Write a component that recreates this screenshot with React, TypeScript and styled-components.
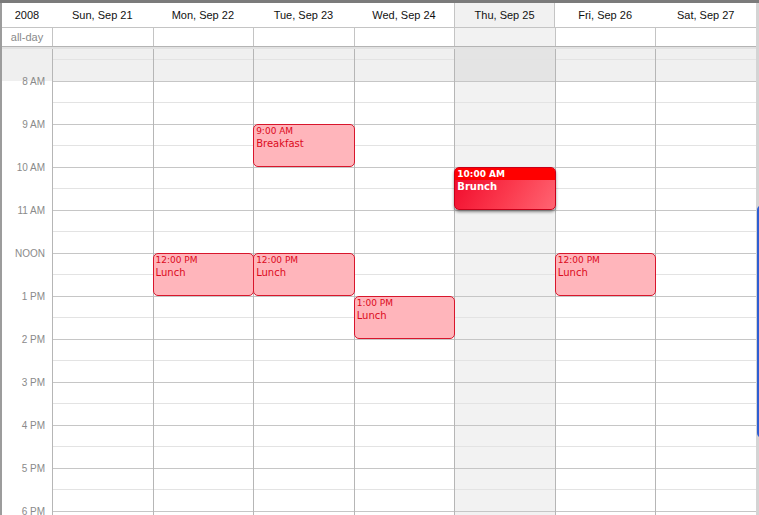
import React from 'react';
import styled, { createGlobalStyle, css } from 'styled-components';

const GlobalStyle = createGlobalStyle`
  html, body { margin: 0; padding: 0; background: #fff; }
  body { font-family: "Liberation Sans", Arial, sans-serif; overflow: hidden; }
`;

const COLS = '50px repeat(7, 1fr)';
const HOUR = 43;
const EARLY = 32;

const Window = styled.div`
  width: 759px;
  height: 515px;
  overflow: hidden;
  display: flex;
  flex-direction: column;
  background: #fff;
`;

const TopBar = styled.div`
  flex: none;
  height: 3px;
  background: #7b7b7b;
`;

const Frame = styled.div`
  flex: 1;
  min-height: 0;
  display: flex;
  border-left: 2px solid #9c9c9c;
`;

const Main = styled.div`
  flex: 1;
  min-width: 0;
  display: flex;
  flex-direction: column;
`;

const ScrollStrip = styled.div`
  flex: none;
  width: 3px;
  position: relative;
  overflow: hidden;
  background: #d4d4d4;
`;

const ScrollThumb = styled.div`
  position: absolute;
  left: 1px;
  top: 202px;
  width: 20px;
  height: 233px;
  box-sizing: border-box;
  border: 2px solid #2e5ed2;
  border-radius: 5px;
`;

const HeaderRow = styled.div`
  flex: none;
  display: grid;
  grid-template-columns: ${COLS};
  height: 24px;
  border-bottom: 1px solid #c4c4c4;
`;

const HeaderCell = styled.div<{ $today?: boolean }>`
  display: flex;
  align-items: center;
  justify-content: center;
  font-size: 11px;
  color: #111;
  white-space: nowrap;
  ${(p) =>
    p.$today &&
    css`
      background: #f1f1f1;
      box-shadow: inset 1px 0 0 #c4c4c4, inset -1px 0 0 #c4c4c4;
    `}
`;

const AllDayRow = styled.div`
  flex: none;
  display: grid;
  grid-template-columns: ${COLS};
  height: 18px;
  border-bottom: 1px solid #b4b4b4;
`;

const AllDayLabel = styled.div`
  display: flex;
  align-items: center;
  justify-content: center;
  font-size: 11px;
  color: #8a8a8a;
`;

const AllDayCell = styled.div<{ $today?: boolean }>`
  border-left: 1px solid #c4c4c4;
  background: ${(p) => (p.$today ? '#f2f2f2' : '#fff')};
`;

const Divider = styled.div`
  flex: none;
  height: 2px;
  background: #e2e2e2;
`;

const Body = styled.div`
  flex: 1;
  min-height: 0;
  overflow: hidden;
  display: grid;
  grid-template-columns: ${COLS};
  align-items: start;
`;

const Gutter = styled.div`
  display: flex;
  flex-direction: column;
  background: linear-gradient(#efefef 0, #efefef ${EARLY}px, #fff ${EARLY}px, #fff 100%);
  height: 600px;
`;

const GutterSpacer = styled.div`
  flex: none;
  height: ${EARLY - 6}px;
`;

const TimeLabel = styled.div`
  flex: none;
  height: ${HOUR}px;
  line-height: 14px;
  padding-right: 7px;
  text-align: right;
  font-size: 10px;
  color: #8a8a8a;
  white-space: nowrap;
`;

const DayColumn = styled.div<{ $today?: boolean }>`
  position: relative;
  display: flex;
  flex-direction: column;
  height: 600px;
  border-left: 1px solid #b6b6b6;
  background: ${(p) => (p.$today ? '#f2f2f2' : '#fff')};
`;

const EarlyBlock = styled.div<{ $today?: boolean }>`
  flex: none;
  height: ${EARLY}px;
  background: ${(p) => (p.$today ? '#e4e4e4' : '#f0f0f0')};
`;

const HourRow = styled.div`
  flex: none;
  height: ${HOUR}px;
  box-sizing: border-box;
  border-top: 1px solid #c6c6c6;
`;

const HalfLine = styled.div<{ $offset: number }>`
  height: 1px;
  margin-top: ${(p) => p.$offset}px;
  background: #e3e3e3;
`;

const EventBox = styled.div<{ $selected?: boolean }>`
  position: absolute;
  left: -1px;
  right: -1px;
  z-index: 2;
  box-sizing: border-box;
  border-radius: 5px;
  overflow: hidden;
  font-family: "DejaVu Sans", Verdana, sans-serif;
  ${(p) =>
    p.$selected
      ? css`
          border: 1px solid #c8001a;
          background: linear-gradient(120deg, #f0082a 0%, #fb3a4e 55%, #ff6472 100%);
          box-shadow: 0 2px 3px rgba(0, 0, 0, 0.45);
          color: #fff;
        `
      : css`
          border: 1px solid #d8162c;
          background: #ffb5bb;
          color: #dc0a20;
        `}
`;

const EventTime = styled.div<{ $selected?: boolean }>`
  font-size: 9px;
  line-height: 11px;
  padding: 1px 0 0 2px;
  white-space: nowrap;
  ${(p) =>
    p.$selected &&
    css`
      background: #ff0000;
      font-weight: bold;
      line-height: 12px;
      padding-top: 0;
    `}
`;

const EventTitle = styled.div<{ $selected?: boolean }>`
  font-size: 10px;
  line-height: 14px;
  padding-left: 2px;
  white-space: nowrap;
  font-weight: ${(p) => (p.$selected ? 'bold' : 'normal')};
`;

const days = [
  'Sun, Sep 21',
  'Mon, Sep 22',
  'Tue, Sep 23',
  'Wed, Sep 24',
  'Thu, Sep 25',
  'Fri, Sep 26',
  'Sat, Sep 27',
];
const TODAY = 4;

const hours = [8, 9, 10, 11, 12, 13, 14, 15, 16, 17, 18];
const hourLabel = (h: number) =>
  h === 12 ? 'NOON' : h < 12 ? `${h} AM` : `${h - 12} PM`;

type Ev = { day: number; start: number; end: number; time: string; title: string; selected?: boolean };

const events: Ev[] = [
  { day: 2, start: 9, end: 10, time: '9:00 AM', title: 'Breakfast' },
  { day: 4, start: 10, end: 11, time: '10:00 AM', title: 'Brunch', selected: true },
  { day: 1, start: 12, end: 13, time: '12:00 PM', title: 'Lunch' },
  { day: 2, start: 12, end: 13, time: '12:00 PM', title: 'Lunch' },
  { day: 5, start: 12, end: 13, time: '12:00 PM', title: 'Lunch' },
  { day: 3, start: 13, end: 14, time: '1:00 PM', title: 'Lunch' },
];

export default function App() {
  return (
    <>
      <GlobalStyle />
      <Window>
        <TopBar />
        <Frame>
          <Main>
            <HeaderRow>
              <HeaderCell>2008</HeaderCell>
              {days.map((d, i) => (
                <HeaderCell key={d} $today={i === TODAY}>
                  {d}
                </HeaderCell>
              ))}
            </HeaderRow>
            <AllDayRow>
              <AllDayLabel>all-day</AllDayLabel>
              {days.map((d, i) => (
                <AllDayCell key={d} $today={i === TODAY} />
              ))}
            </AllDayRow>
            <Divider />
            <Body>
              <Gutter>
                <GutterSpacer />
                {hours.map((h) => (
                  <TimeLabel key={h}>{hourLabel(h)}</TimeLabel>
                ))}
              </Gutter>
              {days.map((d, i) => (
                <DayColumn key={d} $today={i === TODAY}>
                  <EarlyBlock $today={i === TODAY}>
                    <HalfLine $offset={10} />
                  </EarlyBlock>
                  {hours.map((h) => (
                    <HourRow key={h}>
                      <HalfLine $offset={20} />
                    </HourRow>
                  ))}
                  {events
                    .filter((e) => e.day === i)
                    .map((e) => (
                      <EventBox
                        key={e.title + e.start}
                        $selected={e.selected}
                        style={{
                          top: EARLY + (e.start - 8) * HOUR,
                          height: (e.end - e.start) * HOUR,
                        }}
                      >
                        <EventTime $selected={e.selected}>{e.time}</EventTime>
                        <EventTitle $selected={e.selected}>{e.title}</EventTitle>
                      </EventBox>
                    ))}
                </DayColumn>
              ))}
            </Body>
          </Main>
          <ScrollStrip>
            <ScrollThumb />
          </ScrollStrip>
        </Frame>
      </Window>
    </>
  );
}
